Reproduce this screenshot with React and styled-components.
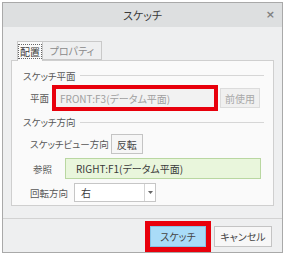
import React from "react";
import styled, { createGlobalStyle } from "styled-components";

const Global = createGlobalStyle`
  html, body { margin: 0; padding: 0; background: #ffffff; }
  body {
    font-family: "Noto Sans CJK JP", "Noto Sans", sans-serif;
    font-feature-settings: "palt";
    color: #444;
  }
  * { box-sizing: border-box; }
`;

const Dialog = styled.div`
  margin: 2px 0 0 2px;
  width: 281px;
  height: 251px;
  border: 1px solid #a9a9a9;
  background: #eeeff0;
  display: flex;
  flex-direction: column;
`;

const TitleBar = styled.div`
  height: 24px;
  background: #dddfe0;
  display: grid;
  grid-template-columns: 1fr auto 1fr;
  align-items: center;
`;

const Title = styled.div`
  grid-column: 2;
  font-size: 11px;
  color: #3a3a3a;
  line-height: 24px;
`;

const Close = styled.div`
  grid-column: 3;
  justify-self: end;
  margin-right: 7px;
  font-family: "DejaVu Sans", sans-serif;
  font-size: 11px;
  font-weight: bold;
  color: #808080;
  line-height: 24px;
`;

const Body = styled.div`
  height: 191px;
  padding: 14px 8px 0 8px;
  display: flex;
  flex-direction: column;
`;

const TabRow = styled.div`
  display: flex;
  height: 19px;
  padding-left: 6px;
  align-items: flex-start;
`;

const Tab = styled.div`
  width: ${(p) => p.$w}px;
  height: ${(p) => (p.$active ? 20 : 19)}px;
  border: 1px solid #c9c9c9;
  border-bottom: ${(p) => (p.$active ? "none" : "1px solid #c9c9c9")};
  border-left: ${(p) => (p.$active ? "1px solid #c9c9c9" : "none")};
  background: ${(p) => (p.$active ? "#fafafa" : "#eeeff0")};
  color: ${(p) => (p.$active ? "#3a3a3a" : "#8a8a8a")};
  font-size: 10px;
  display: flex;
  align-items: center;
  justify-content: center;
  position: relative;
  z-index: ${(p) => (p.$active ? 1 : 0)};
`;

const Focus = styled.span`
  border: 1px dotted #666;
  padding: 1px 1px;
  line-height: 11px;
`;

const Panel = styled.div`
  width: 263px;
  height: 146px;
  border: 1px solid #cfcfcf;
  background: #fafafa;
  display: flex;
  flex-direction: column;
`;

const Section = styled.div`
  display: flex;
  align-items: center;
  gap: 4px;
  height: ${(p) => p.$h}px;
  margin: ${(p) => p.$mt}px 9px 0 11px;
  font-size: 9.5px;
  color: #575757;
  white-space: nowrap;
  &::after {
    content: "";
    flex: 1;
    height: 1px;
    background: #d6d6d6;
  }
`;

const Row = styled.div`
  display: flex;
  align-items: center;
  height: ${(p) => p.$h}px;
  margin-top: ${(p) => p.$mt}px;
  padding-left: ${(p) => p.$indent}px;
  gap: ${(p) => p.$gap}px;
`;

const Label = styled.div`
  font-size: 9.5px;
  color: #575757;
  white-space: nowrap;
`;

const Field = styled.div`
  width: ${(p) => p.$w}px;
  height: 100%;
  display: flex;
  align-items: center;
  padding-left: ${(p) => p.$pl}px;
  font-size: 10px;
  white-space: nowrap;
`;

const FlaggedField = styled(Field)`
  border: 4px solid #e8000c;
  background: #f2f2f2;
  color: #a0a0a0;
`;

const RefField = styled(Field)`
  border: 1px solid #b9d7a1;
  background: #e9f6dc;
  color: #3a3a3a;
`;

const Select = styled.div`
  width: 82px;
  height: 100%;
  border: 1px solid #c6c6c6;
  background: #ffffff;
  display: flex;
  font-size: 10px;
  color: #3a3a3a;
`;

const SelectValue = styled.div`
  flex: 1;
  display: flex;
  align-items: center;
  padding-left: 6px;
`;

const SelectArrow = styled.div`
  width: 11px;
  border-left: 1px solid #d4d4d4;
  display: flex;
  align-items: center;
  justify-content: center;
`;

const SmallButton = styled.div`
  width: ${(p) => p.$w}px;
  height: 20px;
  margin-left: ${(p) => p.$ml || 0}px;
  border: 1px solid ${(p) => (p.$disabled ? "#dcdcdc" : "#c4c4c4")};
  background: ${(p) => (p.$disabled ? "#f0f0f0" : "#f6f6f6")};
  color: ${(p) => (p.$disabled ? "#a8a8a8" : "#444")};
  font-size: 10px;
  display: flex;
  align-items: center;
  justify-content: center;
`;

const Footer = styled.div`
  height: 34px;
  border-top: 1px solid #d2d2d2;
  display: flex;
  justify-content: flex-end;
  align-items: flex-start;
  padding: 2px 10px 0 0;
  gap: 3px;
`;

const Highlight = styled.div`
  border: 5px solid #e8000c;
`;

const Button = styled.div`
  width: ${(p) => p.$w}px;
  height: 21px;
  margin-top: ${(p) => p.$mt || 0}px;
  border: 1px solid ${(p) => (p.$primary ? "#86c3e6" : "#c4c4c4")};
  background: ${(p) => (p.$primary ? "#a9dcf8" : "#f7f7f7")};
  color: #444;
  font-size: 10px;
  display: flex;
  align-items: center;
  justify-content: center;
`;

export default function App() {
  return (
    <>
      <Global />
      <Dialog>
        <TitleBar>
          <Title>スケッチ</Title>
          <Close>×</Close>
        </TitleBar>
        <Body>
          <TabRow>
            <Tab $active $w={26}>
              <Focus>配置</Focus>
            </Tab>
            <Tab $w={59}>プロパティ</Tab>
          </TabRow>
          <Panel>
            <Section $mt={7} $h={15}>スケッチ平面</Section>
            <Row $mt={2} $h={26} $indent={18} $gap={3}>
              <Label>平面</Label>
              <FlaggedField $w={166} $pl={4}>FRONT:F3(データム平面)</FlaggedField>
              <SmallButton $w={40} $disabled $ml={-1}>前使用</SmallButton>
            </Row>
            <Section $mt={4} $h={14}>スケッチ方向</Section>
            <Row $mt={5} $h={20} $indent={18} $gap={2}>
              <Label>スケッチビュー方向</Label>
              <SmallButton $w={32}>反転</SmallButton>
            </Row>
            <Row $mt={4} $h={21} $indent={21} $gap={13}>
              <Label>参照</Label>
              <RefField $w={196} $pl={10}>RIGHT:F1(データム平面)</RefField>
            </Row>
            <Row $mt={4} $h={19} $indent={18} $gap={6}>
              <Label>回転方向</Label>
              <Select>
                <SelectValue>右</SelectValue>
                <SelectArrow>
                  <svg width="5" height="3" viewBox="0 0 5 3">
                    <path d="M0 0 L5 0 L2.5 3 Z" fill="#666" />
                  </svg>
                </SelectArrow>
              </Select>
            </Row>
          </Panel>
        </Body>
        <Footer>
          <Highlight>
            <Button $primary $w={56}>スケッチ</Button>
          </Highlight>
          <Button $w={58} $mt={5}>キャンセル</Button>
        </Footer>
      </Dialog>
    </>
  );
}
